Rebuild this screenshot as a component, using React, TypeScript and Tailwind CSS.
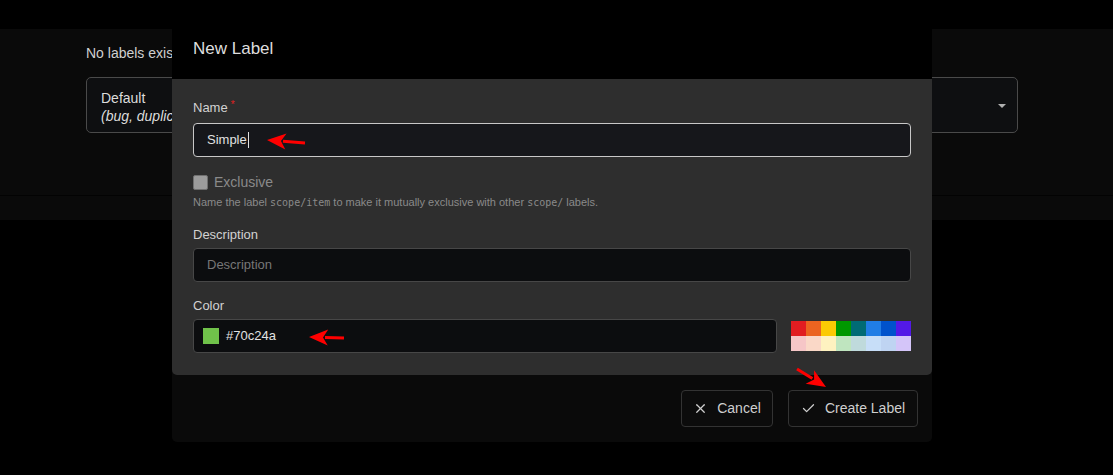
import { X, Check } from "lucide-react";

const font = { fontFamily: '"Liberation Sans", Arial, sans-serif' };
const mono = { fontFamily: '"DejaVu Sans Mono", monospace' };

const palette = [
  ["#e11d21", "#eb6420", "#fbca04", "#009800", "#006b75", "#207de5", "#0052cc", "#5319e7"],
  ["#f6c6c7", "#fad8c7", "#fef2c0", "#bfe5bf", "#bfdadc", "#c7def8", "#bfd4f2", "#d4c5f9"],
];

function Arrow({ x1, y1, x2, y2 }: { x1: number; y1: number; x2: number; y2: number }) {
  // tail (x1,y1) -> tip (x2,y2)
  const dx = x2 - x1;
  const dy = y2 - y1;
  const len = Math.hypot(dx, dy);
  const ux = dx / len;
  const uy = dy / len;
  const bx = x2 - ux * 19;
  const by = y2 - uy * 19;
  const px = -uy * 8;
  const py = ux * 8;
  return (
    <g>
      <line x1={x1} y1={y1} x2={bx + ux * 3} y2={by + uy * 3} stroke="#ff0000" strokeWidth={3} />
      <polygon points={`${x2},${y2} ${bx + px},${by + py} ${bx + ux * 5},${by + uy * 5} ${bx - px},${by - py}`} fill="#ff0000" />
    </g>
  );
}

export default function App() {
  return (
    <div className="relative w-[1113px] h-[475px] overflow-hidden bg-black" style={font}>
      {/* page behind the dialog */}
      <div className="h-[29px]" />
      <div className="h-[166px] bg-[#0a0a0a] pl-[86px] pr-[95px] pt-[14px]">
        <p className="text-[14px] leading-[20px] text-[#d0d0d0]">No labels exist yet.</p>
        <div className="relative mt-[14px] h-[56px] rounded-[5px] border border-[#4a4a4a] bg-[#0e0f11] pl-[14px] pt-[11px]">
          <div className="text-[14px] leading-[18px] text-[#dcdcdc]">Default</div>
          <div className="text-[14px] leading-[18px] italic text-[#dcdcdc]">(bug, duplicate, enhancement, help wanted, invalid, question, wontfix)</div>
          <div className="absolute right-[11px] top-[26px] h-0 w-0 border-x-[4px] border-t-[4px] border-x-transparent border-t-[#b0b0b0]" />
        </div>
      </div>
      <div className="h-px bg-[#030303]" />
      <div className="h-[24px] bg-[#0a0a0a]" />

      {/* dialog */}
      <div className="absolute left-[172px] top-[29px] w-[760px] rounded-b-[5px] bg-[#0a0a0a]">
        <div className="h-[50px] bg-black pl-[21px] pt-[10px] text-[17px] leading-[20px] text-[#dedede]">New Label</div>
        <div className="h-[296px] rounded-b-[5px] bg-[#2e2e2e] px-[21px] pt-[21px]">
          <div className="flex items-start gap-[3px] text-[13px] leading-[16px] text-[#d2d2d2]">
            <span>Name</span>
            <span className="text-[10px] leading-[10px] text-[#e02020]">*</span>
          </div>
          <div className="mt-[7px] flex h-[34px] items-center rounded-[4px] border border-[#c8c8c8] bg-[#16171b] px-[13px] text-[13px] text-[#e2e2e2]">
            Simple<span className="ml-px h-[16px] w-px bg-[#e2e2e2]" />
          </div>

          <div className="mt-[17px] flex items-center gap-[6px]">
            <span className="h-[15px] w-[15px] rounded-[2px] border border-[#707070] bg-[#9c9c9c]" />
            <span className="text-[14px] leading-[16px] text-[#8a8a8a]">Exclusive</span>
          </div>
          <p className="mt-[5px] text-[11px] leading-[14px] text-[#8a8a8a]">
            Name the label <code className="text-[10px]" style={mono}>scope/item</code> to make it mutually exclusive with other <code className="text-[10px]" style={mono}>scope/</code> labels.
          </p>

          <div className="mt-[17px] text-[13px] leading-[16px] text-[#d2d2d2]">Description</div>
          <div className="mt-[5px] flex h-[34px] items-center rounded-[4px] border border-[#474747] bg-[#0c0d0f] px-[13px] text-[13px] text-[#777]">
            Description
          </div>

          <div className="mt-[16px] text-[13px] leading-[16px] text-[#d2d2d2]">Color</div>
          <div className="mt-[5px] flex items-center gap-[14px]">
            <div className="flex h-[34px] flex-1 items-center gap-[7px] rounded-[4px] border border-[#474747] bg-[#0c0d0f] px-[9px] text-[13px] text-[#e2e2e2]">
              <span className="h-[16px] w-[16px] bg-[#70c24a]" />
              #70c24a
            </div>
            <div className="grid grid-cols-8">
              {palette.flat().map((c) => (
                <span key={c} className="h-[15px] w-[15px]" style={{ backgroundColor: c }} />
              ))}
            </div>
          </div>
        </div>
        <div className="flex h-[67px] items-center justify-end gap-[15px] pr-[14px]">
          <button className="flex h-[37px] w-[92px] items-center justify-center gap-[9px] rounded-[4px] border border-[#333] bg-[#0c0c0c] text-[14px] text-[#cfcfcf]">
            <X size={15} strokeWidth={2} />
            Cancel
          </button>
          <button className="flex h-[37px] w-[130px] items-center justify-center gap-[9px] rounded-[4px] border border-[#333] bg-[#0c0c0c] text-[14px] text-[#cfcfcf]">
            <Check size={15} strokeWidth={2} />
            Create Label
          </button>
        </div>
      </div>

      {/* annotation arrows */}
      <svg className="pointer-events-none absolute inset-0" width={1113} height={475}>
        <Arrow x1={305} y1={143} x2={267} y2={140} />
        <Arrow x1={344} y1={338} x2={309} y2={337} />
        <Arrow x1={797} y1={369} x2={826} y2={387} />
      </svg>
    </div>
  );
}
